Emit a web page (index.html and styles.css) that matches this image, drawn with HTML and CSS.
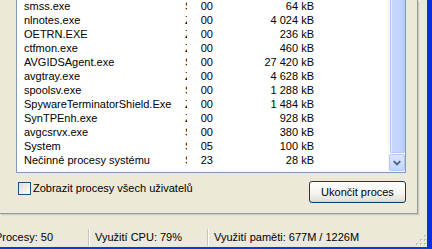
FILE: index.html
```html
<!DOCTYPE html>
<html lang="cs">
<head>
  <meta charset="UTF-8" />
  <title>Správce úloh systému Windows</title>
  <link rel="stylesheet" href="styles.css">
</head>
<body>

<div class="window">
  <div class="client">
    <div class="tabpage">
      <div class="list">
        <div class="rows">
          <div class="row"><span class="c-name">smss.exe</span><span class="c-user">SYSTEM</span><span class="c-cpu">00</span><span class="c-mem">64 kB</span></div>
          <div class="row"><span class="c-name">nlnotes.exe</span><span class="c-user">Zdenek</span><span class="c-cpu">00</span><span class="c-mem">4 024 kB</span></div>
          <div class="row"><span class="c-name">OETRN.EXE</span><span class="c-user">Zdenek</span><span class="c-cpu">00</span><span class="c-mem">236 kB</span></div>
          <div class="row"><span class="c-name">ctfmon.exe</span><span class="c-user">Zdenek</span><span class="c-cpu">00</span><span class="c-mem">460 kB</span></div>
          <div class="row"><span class="c-name">AVGIDSAgent.exe</span><span class="c-user">SYSTEM</span><span class="c-cpu">00</span><span class="c-mem">27 420 kB</span></div>
          <div class="row"><span class="c-name">avgtray.exe</span><span class="c-user">Zdenek</span><span class="c-cpu">00</span><span class="c-mem">4 628 kB</span></div>
          <div class="row"><span class="c-name">spoolsv.exe</span><span class="c-user">SYSTEM</span><span class="c-cpu">00</span><span class="c-mem">1 288 kB</span></div>
          <div class="row"><span class="c-name">SpywareTerminatorShield.Exe</span><span class="c-user">Zdenek</span><span class="c-cpu">00</span><span class="c-mem">1 484 kB</span></div>
          <div class="row"><span class="c-name">SynTPEnh.exe</span><span class="c-user">Zdenek</span><span class="c-cpu">00</span><span class="c-mem">928 kB</span></div>
          <div class="row"><span class="c-name">avgcsrvx.exe</span><span class="c-user">SYSTEM</span><span class="c-cpu">00</span><span class="c-mem">380 kB</span></div>
          <div class="row"><span class="c-name">System</span><span class="c-user">SYSTEM</span><span class="c-cpu">05</span><span class="c-mem">100 kB</span></div>
          <div class="row"><span class="c-name">Nečinné procesy systému</span><span class="c-user">SYSTEM</span><span class="c-cpu">23</span><span class="c-mem">28 kB</span></div>
        </div>
        <div class="vscroll">
          <div class="thumb"></div>
          <div class="arrow">
            <svg width="15" height="15" viewBox="0 0 15 15">
              <path d="M4 6 L7.5 9.5 L11 6" fill="none" stroke="#4d6185" stroke-width="2"/>
            </svg>
          </div>
        </div>
      </div>

      <div class="actions">
        <label class="check"><span class="box"></span>Zobrazit procesy všech uživatelů</label>
        <button class="btn">Ukončit proces</button>
      </div>
    </div>

    <div class="statusbar">
      <div class="pane pane-procs">Procesy: 50</div>
      <div class="pane pane-cpu">Využití CPU: 79%</div>
      <div class="pane pane-mem">Využití paměti: 677M / 1226M</div>
      <svg class="grip" width="12" height="12" viewBox="0 0 12 12">
        <rect x="9" y="1" width="2" height="2" fill="#c2bfb1"/>
        <rect x="5" y="5" width="2" height="2" fill="#c2bfb1"/>
        <rect x="9" y="5" width="2" height="2" fill="#c2bfb1"/>
        <rect x="1" y="9" width="2" height="2" fill="#c2bfb1"/>
        <rect x="5" y="9" width="2" height="2" fill="#c2bfb1"/>
        <rect x="9" y="9" width="2" height="2" fill="#c2bfb1"/>
        <rect x="10" y="2" width="1" height="1" fill="#fff"/>
        <rect x="6" y="6" width="1" height="1" fill="#fff"/>
        <rect x="10" y="6" width="1" height="1" fill="#fff"/>
        <rect x="2" y="10" width="1" height="1" fill="#fff"/>
        <rect x="6" y="10" width="1" height="1" fill="#fff"/>
        <rect x="10" y="10" width="1" height="1" fill="#fff"/>
      </svg>
    </div>
  </div>
</div>

</body>
</html>
```

FILE: styles.css
```css
body {
  margin: 0;
  padding: 0;
  overflow: hidden;
  font-family: "Liberation Sans", Arial, sans-serif;
  font-size: 11px;
  color: #000;
  background: #ece9d8;
}
.window {
  width: 432px;
  height: 249px;
  box-sizing: border-box;
  display: flex;
  border-right: 5px solid #0831d9;
  border-bottom: 2px solid #0b3bd6;
  background: #ece9d8;
  overflow: hidden;
}
.client {
  flex: 1;
  display: flex;
  flex-direction: column;
  min-width: 0;
}
.tabpage {
  width: 418px;
  height: 214px;
  box-sizing: border-box;
  padding-left: 16px;
  border-right: 1px solid #919b9c;
  border-bottom: 1px solid #919b9c;
  box-shadow: 1px 1px 0 #d0cdbf, 2px 2px 0 #e3e0d2;
  background: #f4f3ee;
  background: #ece9d8;
}
.list {
  width: 390px;
  height: 173px;
  box-sizing: border-box;
  display: flex;
  background: #fff;
  border: 1px solid #7f9db9;
  border-top: none;
  overflow: hidden;
}
.rows {
  flex: 1;
  margin-top: -1px;
  overflow: hidden;
}
.row {
  display: flex;
  height: 14px;
  line-height: 14px;
  white-space: nowrap;
}
.c-name {
  width: 166px;
  padding-left: 7px;
  box-sizing: border-box;
  overflow: hidden;
}
.c-user {
  width: 4px;
  padding-left: 2px;
  box-sizing: border-box;
  overflow: hidden;
}
.c-cpu {
  width: 30px;
  padding-right: 4px;
  box-sizing: border-box;
  text-align: right;
}
.c-mem {
  width: 101px;
  padding-right: 4px;
  box-sizing: border-box;
  text-align: right;
}
.vscroll {
  width: 17px;
  display: flex;
  flex-direction: column;
  background: #f7f6f0;
  padding: 0 0 1px 1px;
  box-sizing: border-box;
}
.thumb {
  flex: 1;
  margin-left: 1px;
  border: 1px solid #b4c8f6;
  border-top: none;
  border-radius: 0 0 2px 2px;
  background: linear-gradient(to right, #c9d8fc, #c3d3fd 70%, #b8caf6);
  box-shadow: inset 1px 0 0 #e4ecfe;
}
.arrow {
  height: 17px;
  margin-top: 1px;
  box-sizing: border-box;
  border: 1px solid #b4c8f6;
  border-radius: 2px;
  background: linear-gradient(to bottom, #dbe5fd, #c3d3fd);
  display: flex;
  align-items: center;
  justify-content: center;
}
.actions {
  display: flex;
  align-items: flex-start;
  justify-content: space-between;
  width: 390px;
  margin-top: 8px;
}
.check {
  display: flex;
  align-items: center;
  gap: 2px;
  margin-top: 1px;
  margin-left: 2px;
  line-height: 13px;
}
.box {
  width: 13px;
  height: 13px;
  box-sizing: border-box;
  border: 1px solid #1c5180;
  background: linear-gradient(135deg, #dcdcd7, #fff);
}
.btn {
  width: 97px;
  height: 22px;
  padding: 0;
  font-family: "Liberation Sans", Arial, sans-serif;
  font-size: 11px;
  color: #000;
  border: 1px solid #003c74;
  border-radius: 3px;
  background: linear-gradient(to bottom, #fff, #f3f3ef 60%, #e3e2da 90%, #d6d0c5);
}
.statusbar {
  flex: 1;
  display: flex;
  align-items: flex-end;
  padding-bottom: 1px;
  position: relative;
}
.pane {
  height: 17px;
  line-height: 17px;
  white-space: nowrap;
  box-sizing: border-box;
}
.pane-procs {
  width: 88px;
  margin-left: -5px;
  padding-left: 0;
  width: 93px;
}
.pane-cpu {
  width: 119px;
  padding-left: 6px;
  border-left: 1px solid #c9c6b8;
  box-shadow: inset 1px 0 0 #fff;
}
.pane-mem {
  flex: 1;
  padding-left: 6px;
  border-left: 1px solid #c9c6b8;
  box-shadow: inset 1px 0 0 #fff;
}
.grip {
  align-self: flex-end;
  margin-bottom: 0;
}
```
